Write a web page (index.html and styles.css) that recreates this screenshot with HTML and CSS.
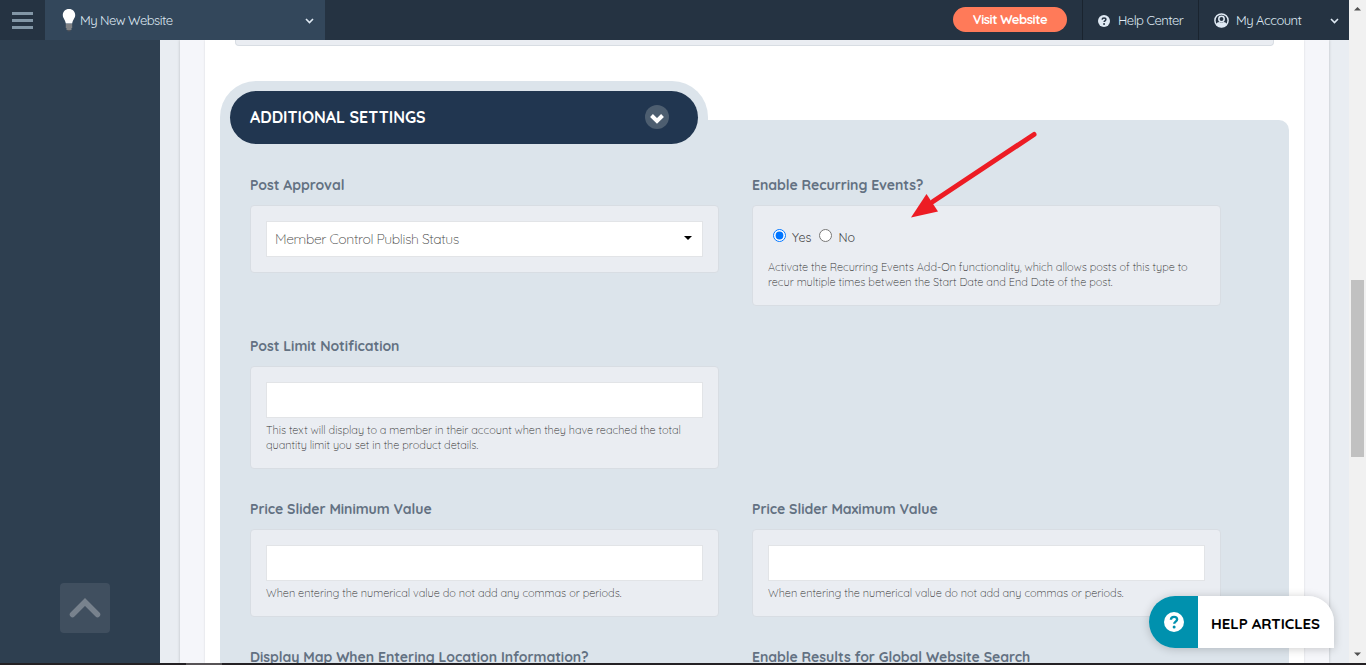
FILE: index.html
```html
<!DOCTYPE html>
<html lang="en">
<head>
  <meta charset="UTF-8">
  <meta name="viewport" content="width=device-width, initial-scale=1">
  <title>My New Website</title>
  <link rel="stylesheet" href="styles.css">
</head>
<body>
  <div class="window">
    <div class="app">
      <header class="topbar">
        <button class="menu-btn" aria-label="Menu"><span></span><span></span><span></span></button>
        <div class="site-select">
          <svg class="bulb" width="14" height="24" viewBox="0 0 14 24">
            <path d="M7 1C3.200 1 .8 3.700.8 7c0 3.200 2.500 4.700 3 8.500h6.400C10.700 11.700 13.200 10.200 13.200 7c0-3.300-2.400-6-6.200-6z" fill="#fff"/>
            <path d="M3.800 17h6.400M3.800 19h6.400M4.500 21h5" stroke="#9a9794" stroke-width="1.300"/>
            <path d="M5.500 22.700h3" stroke="#55565a" stroke-width="1.200"/>
          </svg>
          <span class="site-name">My New Website</span>
          <svg class="chev" width="9" height="6" viewBox="0 0 9 6"><path d="M1 1l3.500 3.500L8 1"/></svg>
        </div>
        <div class="visit"><a class="visit-btn">Visit Website</a></div>
        <div class="top-item help-center">
          <svg width="12" height="12" viewBox="0 0 16 16"><circle cx="8" cy="8" r="8" fill="#dfe9f3"/><path d="M5.500 6.200C5.600 4.600 6.700 3.900 8 3.900s2.500.8 2.500 2.100c0 1.700-2.300 1.700-2.300 3.300" fill="none" stroke="#253342" stroke-width="2"/><circle cx="8.100" cy="11.900" r="1.300" fill="#253342"/></svg>
          <span>Help Center</span>
        </div>
        <div class="top-item account">
          <svg width="15" height="15" viewBox="0 0 15 15"><circle cx="7.500" cy="7.500" r="6.600" fill="none" stroke="#dfe9f3" stroke-width="1.500"/><circle cx="7.500" cy="6" r="2.700" fill="none" stroke="#dfe9f3" stroke-width="1.500"/><path d="M2 11.300c.7-1.600 2.200-2.300 3.300-2.300 1.200.7 3.200.7 4.400 0 1.100 0 2.600.7 3.300 2.300-2.400 3.800-8.600 3.800-11 0z" fill="#dfe9f3"/></svg>
          <span>My Account</span>
          <svg class="chev" width="9" height="6" viewBox="0 0 9 6"><path d="M1 1l3.500 3.500L8 1"/></svg>
        </div>
      </header>

      <div class="main">
        <aside class="sidebar">
          <button class="to-top" aria-label="Back to top">
            <svg width="32" height="20" viewBox="0 0 32 20"><path d="M3.500 16.500L16 4l12.500 12.500" fill="none" stroke="#78828d" stroke-width="5.500" stroke-linecap="round"/></svg>
          </button>
        </aside>
        <div class="content">
          <div class="sheet">
            <div class="panel">
              <div class="prev-box"></div>

              <div class="section-tab">
                <div class="section-head">
                  <span class="section-title">ADDITIONAL SETTINGS</span>
                  <span class="toggle"><svg width="16" height="11" viewBox="0 0 16 11"><path d="M2.500 2.500L8 8l5.500-5.500" fill="none" stroke="#fff" stroke-width="4"/></svg></span>
                </div>
              </div>

              <div class="settings">
                <div class="field">
                  <label>Post Approval</label>
                  <div class="box">
                    <div class="input select"><span>Member Control Publish Status</span><i class="caret"></i></div>
                  </div>
                </div>
                <div class="field">
                  <label>Enable Recurring Events?</label>
                  <div class="box">
                    <div class="radios">
                      <input type="radio" name="recurring" checked><span class="opt">Yes</span>
                      <input type="radio" name="recurring"><span class="opt">No</span>
                    </div>
                    <p class="hint">Activate the Recurring Events Add-On functionality, which allows posts of this type to<br>recur multiple times between the Start Date and End Date of the post.</p>
                  </div>
                </div>
                <div class="field wide">
                  <label>Post Limit Notification</label>
                  <div class="box">
                    <div class="input"></div>
                    <p class="hint">This text will display to a member in their account when they have reached the total<br>quantity limit you set in the product details.</p>
                  </div>
                </div>
                <div class="field">
                  <label>Price Slider Minimum Value</label>
                  <div class="box">
                    <div class="input"></div>
                    <p class="hint">When entering the numerical value do not add any commas or periods.</p>
                  </div>
                </div>
                <div class="field">
                  <label>Price Slider Maximum Value</label>
                  <div class="box">
                    <div class="input"></div>
                    <p class="hint">When entering the numerical value do not add any commas or periods.</p>
                  </div>
                </div>
                <div class="field">
                  <label>Display Map When Entering Location Information?</label>
                </div>
                <div class="field">
                  <label>Enable Results for Global Website Search</label>
                </div>
              </div>
            </div>
          </div>
        </div>
      </div>
    </div>

    <div class="scrollbar">
      <svg width="9" height="5" viewBox="0 0 9 5"><path d="M1 4.500L4.500 1 8 4.500z" fill="#505050"/></svg>
      <div class="track"><div class="thumb"></div></div>
      <svg width="9" height="5" viewBox="0 0 9 5"><path d="M1 .5L4.500 4 8 .5z" fill="#505050"/></svg>
    </div>
  </div>
  <div class="taskbar"><span></span></div>

  <svg class="arrow" width="132" height="92" viewBox="0 0 132 92">
    <path d="M124 5.500L23 72.500" stroke="#ed1c24" stroke-width="5" stroke-linecap="round"/>
    <path d="M1 88.500L16.500 65l11.500 17.500z" fill="#ed1c24"/>
  </svg>

  <div class="help-widget">
    <div class="help-icon">
      <svg width="20" height="20" viewBox="0 0 16 16"><circle cx="8" cy="8" r="8" fill="#fff"/><path d="M5.500 6.200C5.600 4.600 6.700 3.900 8 3.900s2.500.8 2.500 2.100c0 1.700-2.300 1.700-2.300 3.300" fill="none" stroke="#0091ae" stroke-width="1.900"/><circle cx="8.100" cy="11.900" r="1.200" fill="#0091ae"/></svg>
    </div>
    <div class="help-text"><span>HELP ARTICLES</span></div>
  </div>
</body>
</html>
```
FILE: styles.css
```css
* {
  box-sizing: border-box;
}

body {
  margin: 0;
  height: 665px;
  overflow: hidden;
  font-family: Quicksand, Lato, "Open Sans", sans-serif;
  font-size: 13px;
  color: #444;
  background: #e9edf2;
}

button {
  border: none;
  padding: 0;
}

.window {
  display: flex;
  height: 663px;
}

.app {
  width: 1349px;
  display: flex;
  flex-direction: column;
}

.topbar {
  display: flex;
  height: 40px;
  flex-shrink: 0;
  background: #253342;
  color: #dfe9f3;
  font-size: 13px;
  letter-spacing: -0.53px;
}

.menu-btn {
  width: 45px;
  background: #253342;
  display: flex;
  flex-direction: column;
  justify-content: center;
  align-items: center;
  gap: 4px;
}

.menu-btn span {
  width: 21px;
  height: 3px;
  background: #8296a6;
}

.site-select {
  width: 280px;
  background: #33475b;
  display: flex;
  align-items: center;
  padding: 0 11px 0 17px;
}

.site-name {
  margin: -1px 0 0 4px;
  flex: 1;
  white-space: nowrap;
}

.chev {
  fill: none;
  stroke: #dfe9f3;
  stroke-width: 1.6;
  margin-top: 2px;
}

.visit {
  flex: 1;
  display: flex;
  justify-content: flex-end;
  align-items: center;
  padding: 0 15px 1px 0;
}

.visit-btn {
  width: 114px;
  height: 25px;
  line-height: 25px;
  border-radius: 13px;
  background: #ff7a59;
  color: #fff;
  font-weight: bold;
  letter-spacing: -0.46px;
  text-align: center;
}

.top-item {
  display: flex;
  align-items: center;
  border-left: 1px solid #1a242f;
  white-space: nowrap;
}

.top-item svg:first-child {
  margin-top: 1px;
}

.top-item span {
  margin-top: -1px;
}

.help-center {
  width: 116px;
  padding-left: 15px;
  gap: 8px;
}

.account {
  width: 151px;
  padding: 0 10px 0 15px;
  gap: 7px;
}

.account span {
  flex: 1;
}

.main {
  flex: 1;
  min-height: 0;
  display: flex;
}

.sidebar {
  width: 160px;
  background: #2e3f50;
  display: flex;
  align-items: flex-end;
  padding: 0 0 30px 60px;
}

.to-top {
  width: 50px;
  height: 50px;
  border-radius: 4px;
  background: #404f5f;
  display: flex;
  align-items: center;
  justify-content: center;
}

.content {
  flex: 1;
  padding: 0 20px;
  overflow: hidden;
}

.sheet {
  height: 100%;
  background: #f5f6fa;
  padding: 0 25px;
  box-shadow: 0 0 3px rgba(0, 0, 0, .2);
}

.panel {
  height: 100%;
  background: #fff;
  padding: 0 15px;
  box-shadow: 0 0 2px rgba(0, 0, 0, .12);
  overflow: hidden;
}

.prev-box {
  height: 6px;
  margin: 0 15px 35px;
  background: #eaedf2;
  border: 1px solid #d8dde3;
  border-top: none;
  border-radius: 0 0 4px 4px;
}

.section-tab {
  width: 488px;
  height: 39px;
  padding: 10px 10px 0;
  background: #dce4eb;
  border-radius: 36px 36px 0 0;
}

.section-head {
  height: 53px;
  border-radius: 27px;
  background: #213650;
  color: #fff;
  display: flex;
  align-items: center;
  justify-content: space-between;
  padding: 0 29px 1px 20px;
  position: relative;
}

.section-title {
  font-size: 16px;
  font-weight: bold;
}

.toggle {
  width: 24px;
  height: 24px;
  border-radius: 50%;
  background: #4d5e70;
  display: flex;
  align-items: center;
  justify-content: center;
  padding-top: 2px;
}

.settings {
  background: #dce4eb;
  border-radius: 0 10px 0 0;
  padding: 55px 30px 0;
  height: 600px;
  display: grid;
  grid-template-columns: 468.5px 468.5px;
  column-gap: 33.5px;
  row-gap: 30px;
  align-content: start;
  align-items: start;
}

.wide {
  grid-column: 1 / 3;
  width: 468.5px;
}

.field label {
  display: block;
  height: 20px;
  line-height: 20px;
  margin-bottom: 10px;
  font-size: 14px;
  font-weight: bold;
  letter-spacing: -0.03px;
  color: #637182;
  white-space: nowrap;
}

.box {
  background: #eaedf2;
  border: 1px solid #d8dde3;
  border-radius: 4px;
  padding: 15px;
}

.input {
  height: 36px;
  background: #fff;
  border: 1px solid #e2e4e7;
}

.select {
  display: flex;
  align-items: center;
  justify-content: space-between;
  padding: 0 10px 0 8px;
  font-size: 14px;
  font-weight: 300;
  letter-spacing: -0.39px;
}

.caret {
  border: 4px solid transparent;
  border-top-color: #000;
  border-bottom: none;
  margin-bottom: 3px;
}

.radios {
  height: 34px;
  display: flex;
  align-items: flex-start;
  font-size: 12.5px;
}

.radios input {
  width: 13px;
  height: 13px;
  margin: 8px 6px 0 5px;
}

.opt {
  line-height: 16px;
  margin: 8px 3px 0 0;
}

.hint {
  margin: 5px 0 0;
  font-size: 11px;
  font-weight: 300;
  letter-spacing: -0.03px;
  line-height: 15px;
  color: #333;
  white-space: nowrap;
}

.scrollbar {
  width: 17px;
  background: #f1f1f1;
  display: flex;
  flex-direction: column;
  align-items: center;
  padding: 6px 0;
}

.track {
  flex: 1;
  width: 13px;
  padding-top: 269px;
}

.thumb {
  height: 177px;
  background: #c1c1c1;
}

.taskbar {
  height: 2px;
  background: #242124;
  padding-left: 186px;
}

.taskbar span {
  display: block;
  width: 36px;
  height: 2px;
  background: #575356;
}

/* callout over the form */
.arrow {
  position: absolute;
  left: 910px;
  top: 129px;
}

.help-widget {
  position: absolute;
  left: 1149px;
  top: 596px;
  width: 185px;
  height: 52px;
  display: flex;
  border-radius: 26px 26px 0 26px;
  overflow: hidden;
  box-shadow: 0 1px 10px rgba(0, 0, 0, .2);
}

.help-icon {
  width: 49px;
  background: #0091ae;
  display: flex;
  align-items: center;
  justify-content: center;
}

.help-text {
  flex: 1;
  background: #fff;
  color: #000;
  font-size: 15px;
  font-weight: bold;
  letter-spacing: -0.05px;
  display: flex;
  align-items: center;
  padding: 3px 0 0 13px;
  white-space: nowrap;
}
```
